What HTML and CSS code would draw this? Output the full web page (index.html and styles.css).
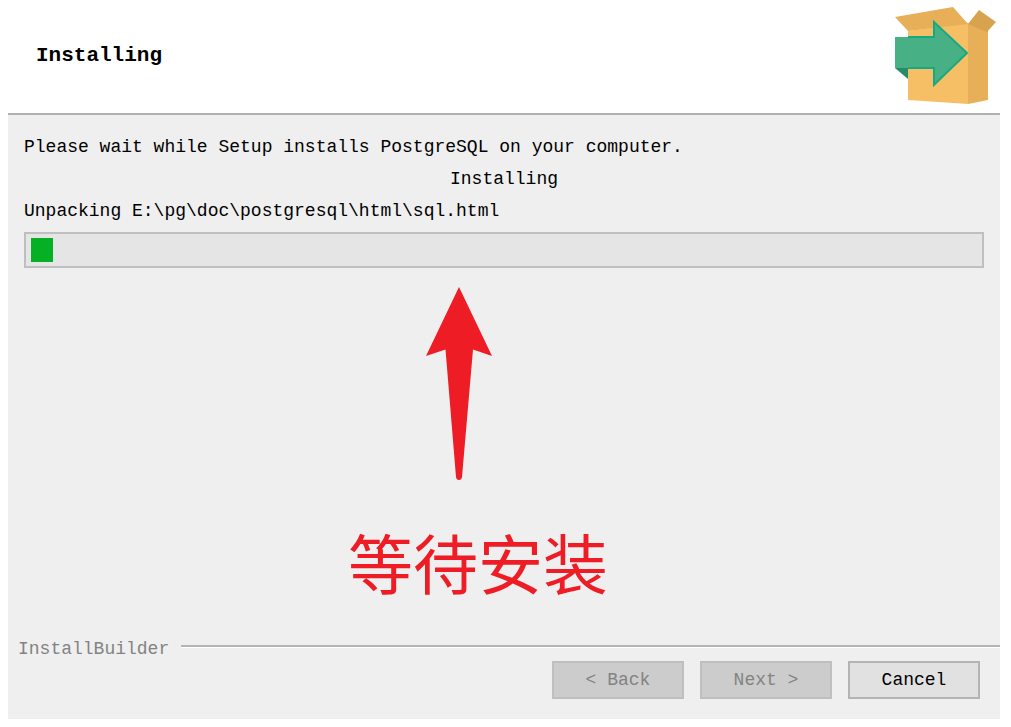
FILE: index.html
```html
<!DOCTYPE html>
<html lang="en">
<head>
<meta charset="utf-8">
<title>Setup - PostgreSQL</title>
<link rel="stylesheet" href="styles.css">
</head>
<body>
<div class="window">
  <header class="header">
    <h1 class="title">Installing</h1>
    <svg class="logo" width="104" height="100" viewBox="0 0 104 100" aria-hidden="true">
      <path fill="#f6bf66" d="M15 24 75 16V97L15 93Z"/>
      <path fill="#e6af58" d="M75 16 95 24V93L75 97Z"/>
      <path fill="#e6af58" d="M2 10 60 0 75 17 15 24Z"/>
      <path fill="#d8a34f" d="M75 17 86 3 103 15 94 25Z"/>
      <path fill="#258c69" d="M2 61H15V72Z"/>
      <path fill="#48b085" d="M2 30H41V15L74 46 41 78V61H2Z"/>
      <path fill="none" stroke="#16aa82" stroke-width="2" d="M15 30H41V15L74 46 41 78V61H15"/>
    </svg>
  </header>
  <main class="content">
    <p class="line">Please wait while Setup installs PostgreSQL on your computer.</p>
    <p class="line line-center">Installing</p>
    <label class="line" for="install-progress">Unpacking E:\pg\doc\postgresql\html\sql.html</label>
    <progress class="progress" id="install-progress" max="1000" value="23"></progress>
    <div class="note">
      <svg class="note-arrow" width="66" height="194" viewBox="0 0 66 194" aria-hidden="true">
        <path fill="#ee1c25" d="M33 0 66 69 47 62.500 36 190Q35.500 193 33 193T30 190L19.500 62.500 0 69Z"/>
      </svg>
      <p class="note-text" lang="zh-CN">等待安装</p>
    </div>
  </main>
  <footer class="footer">
    <div class="brand"><span>InstallBuilder</span><span class="rule"></span></div>
    <div class="buttons">
      <button class="button" type="button" disabled>&lt; Back</button>
      <button class="button" type="button" disabled>Next &gt;</button>
      <button class="button" type="button">Cancel</button>
    </div>
  </footer>
</div>
</body>
</html>
```
FILE: styles.css
```css
* {
  box-sizing: border-box;
}

body {
  margin: 0;
  background: #fff;
  color: #000;
  font: 18px/32px "Liberation Mono", monospace;
}

h1,
p {
  margin: 0;
}

.window {
  display: flex;
  flex-direction: column;
  min-height: calc(100vh - 8px);
  margin: 0 11px 8px 8px;
  background: #efefef;
}

.header {
  display: flex;
  justify-content: space-between;
  align-items: flex-start;
  height: 115px;
  padding: 7px 3px 0 28px;
  background: #fff;
  border-bottom: 2px solid #b0b0b0;
}

.title {
  padding-top: 33px;
  font-size: 21px;
  line-height: 32px;
}

.content {
  display: flex;
  flex: 1;
  flex-direction: column;
  padding: 16px 16px 0;
}

.line-center {
  text-align: center;
}

.progress {
  appearance: none;
  width: 100%;
  height: 36px;
  margin-top: 5px;
  padding: 4px 5px;
  background: #e5e5e5;
  border: 2px solid #bfbfbf;
}

.progress::-webkit-progress-bar {
  background: transparent;
}

.progress::-webkit-progress-value {
  background: #06b025;
}

.note {
  display: flex;
  flex-direction: column;
  width: 260px;
  margin: 19px 0 0 324px;
  color: #ee1c25;
}

.note-arrow {
  margin-left: 78px;
}

.note-text {
  margin-top: 32px;
  font-family: "Noto Sans CJK SC", sans-serif;
  font-size: 65px;
  line-height: 96px;
  white-space: nowrap;
}

.footer {
  padding: 0 0 20px 10px;
}

.brand {
  display: flex;
  align-items: center;
  gap: 12px;
  color: #838383;
}

.rule {
  flex: 1;
  height: 3px;
  margin-bottom: 6px;
  background: #b4b4b4;
  border-bottom: 1px solid #fff;
}

.buttons {
  display: flex;
  justify-content: flex-end;
  gap: 16px;
  margin-top: -4px;
  padding-right: 20px;
}

.button {
  width: 132px;
  height: 38px;
  padding: 0;
  background: #e1e1e1;
  border: 2px solid #b4b4b4;
  border-radius: 0;
  color: #000;
  font: inherit;
}

.button:disabled {
  background: #cccccc;
  border-color: #bfbfbf;
  color: #838383;
}
```
